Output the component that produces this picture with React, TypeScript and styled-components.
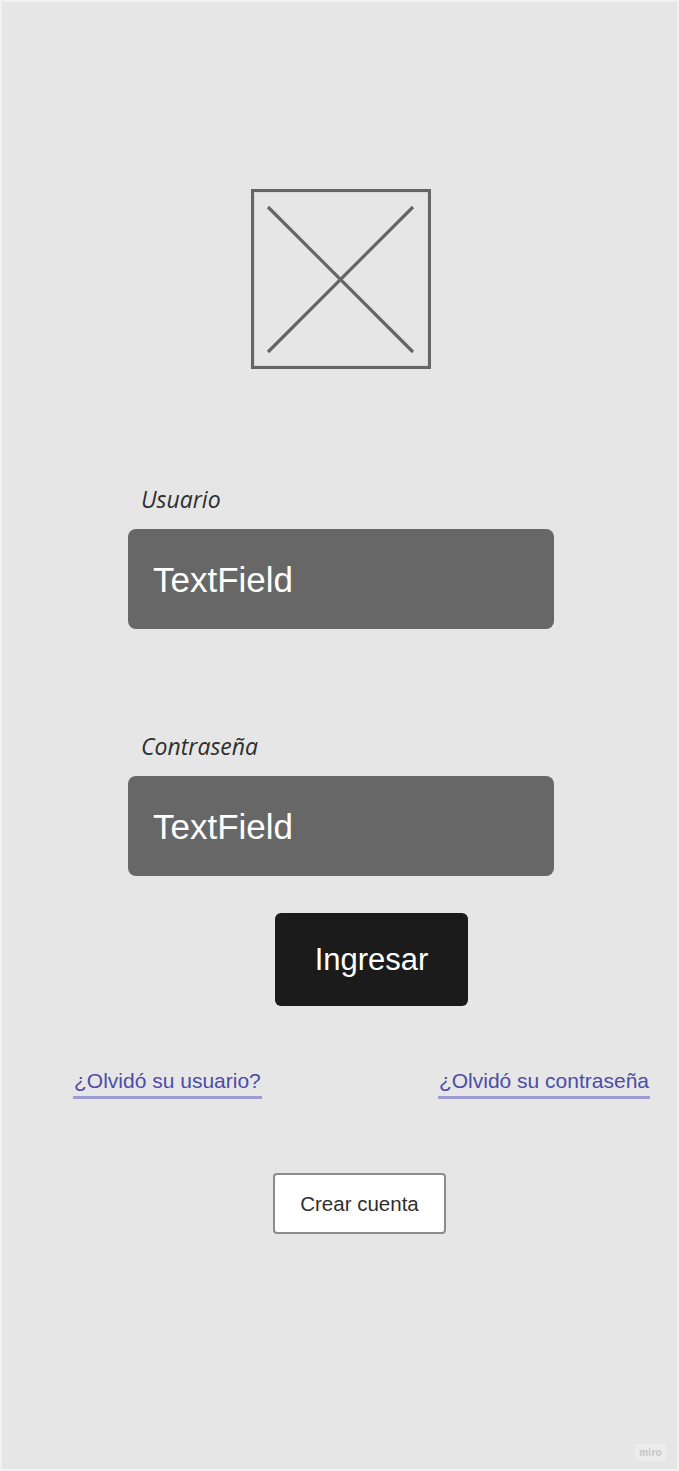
import React from "react";
import styled, { createGlobalStyle } from "styled-components";

const Global = createGlobalStyle`
  html, body { margin: 0; padding: 0; background: #f2f2f2; }
  * { box-sizing: border-box; }
`;

const Frame = styled.div`
  position: relative;
  width: 679px;
  height: 1471px;
  background: #e6e6e6;
  border: 2px solid #f1f1f1;
  display: flex;
  flex-direction: column;
  align-items: flex-start;
  padding-top: 187px;
  font-family: "Liberation Sans", Arial, sans-serif;
`;

const Logo = styled.svg`
  display: block;
  margin-left: 249px;
  flex: none;
`;

const Label = styled.div<{ $top: number }>`
  margin-top: ${(p) => p.$top}px;
  margin-left: 139px;
  font-family: "Open Sans", sans-serif;
  font-style: italic;
  font-size: 23px;
  line-height: 27px;
  color: #2e2e2e;
`;

const Field = styled.div`
  margin-top: 16px;
  margin-left: 126px;
  width: 426px;
  height: 100px;
  background: #676767;
  border-radius: 8px;
  display: flex;
  align-items: center;
  padding-left: 25px;
  padding-top: 2px;
  color: #ffffff;
  font-size: 35px;
`;

const PrimaryButton = styled.button`
  margin-top: 37px;
  margin-left: 273px;
  width: 193px;
  height: 93px;
  background: #1b1b1b;
  border: none;
  border-radius: 6px;
  color: #ffffff;
  font-family: "Liberation Sans", Arial, sans-serif;
  font-size: 31px;
  padding: 0;
  display: flex;
  align-items: center;
  justify-content: center;
`;

const LinkRow = styled.div`
  margin-top: 63px;
  margin-left: 71px;
  width: 577px;
  display: flex;
  justify-content: space-between;
`;

const Link = styled.a`
  display: inline-block;
  font-size: 21px;
  line-height: 24px;
  color: #4c4ca8;
  text-decoration: none;
  padding: 0 1px 3px 1px;
  border-bottom: 3px solid #9c9cd2;
`;

const SecondaryButton = styled.button`
  margin-top: 74px;
  margin-left: 271px;
  width: 173px;
  height: 61px;
  background: #ffffff;
  border: 2px solid #8c8c8c;
  border-radius: 4px;
  color: #2e2e2e;
  font-family: "Liberation Sans", Arial, sans-serif;
  font-size: 20.5px;
  padding: 0;
  display: flex;
  align-items: center;
  justify-content: center;
`;

const Badge = styled.div`
  position: absolute;
  right: 11px;
  bottom: 8px;
  padding: 3px 4px;
  background: #ececec;
  border-radius: 3px;
  color: #c6c6c6;
  font-family: "Liberation Sans", Arial, sans-serif;
  font-size: 10px;
  font-weight: bold;
  letter-spacing: 0.3px;
`;

export default function App() {
  return (
    <>
      <Global />
      <Frame>
        <Logo width="180" height="180" viewBox="0 0 180 180">
          <rect x="1.5" y="1.5" width="177" height="177" fill="none" stroke="#666" strokeWidth="3.2" />
          <line x1="17" y1="18" x2="162" y2="163" stroke="#666" strokeWidth="3.2" />
          <line x1="162" y1="18" x2="17" y2="163" stroke="#666" strokeWidth="3.2" />
        </Logo>
        <Label $top={117}>Usuario</Label>
        <Field>TextField</Field>
        <Label $top={104}>Contraseña</Label>
        <Field>TextField</Field>
        <PrimaryButton>Ingresar</PrimaryButton>
        <LinkRow>
          <Link href="#">¿Olvidó su usuario?</Link>
          <Link href="#">¿Olvidó su contraseña</Link>
        </LinkRow>
        <SecondaryButton>Crear cuenta</SecondaryButton>
        <Badge>miro</Badge>
      </Frame>
    </>
  );
}
